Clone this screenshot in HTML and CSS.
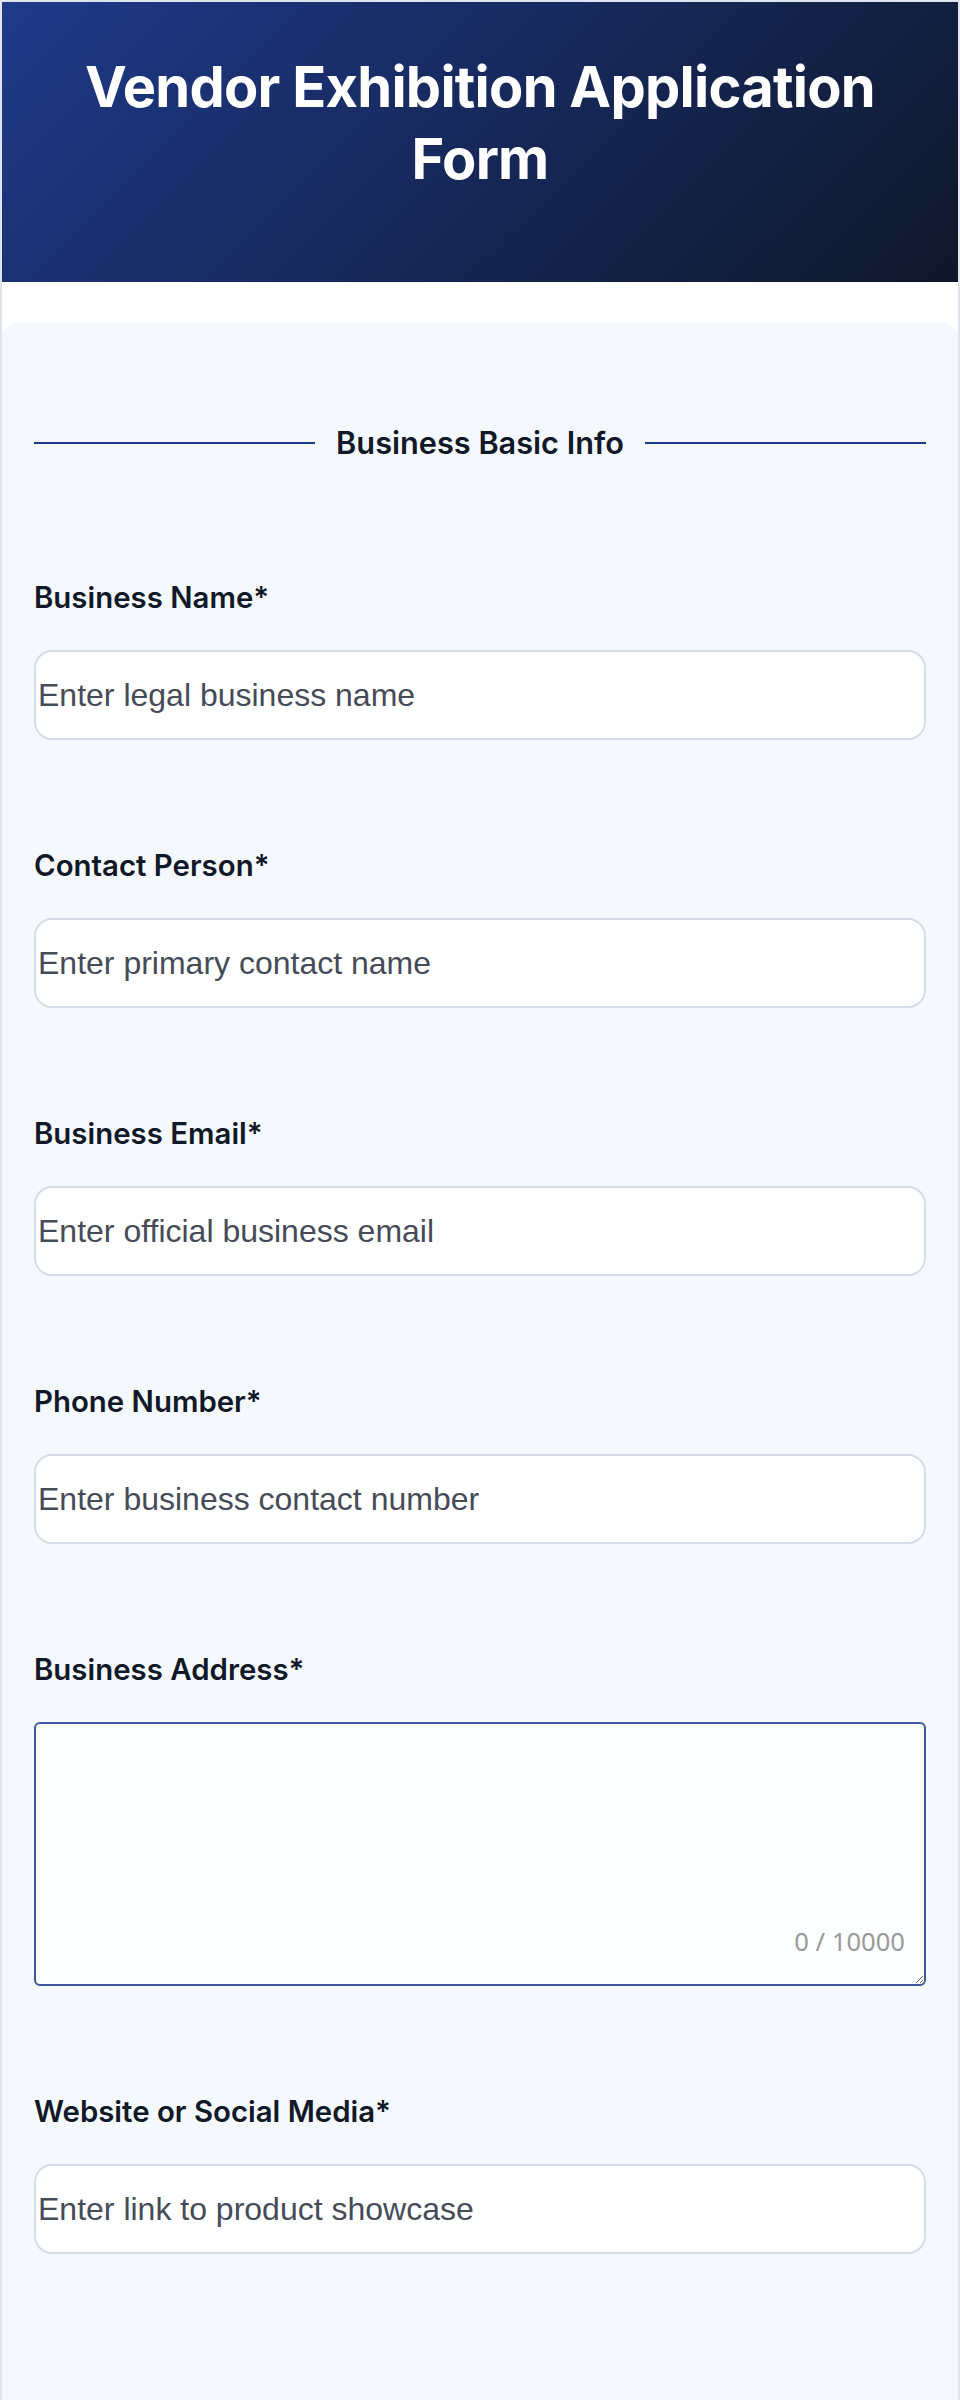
FILE: index.html
```html
<!DOCTYPE html>
<html lang="en">
<head>
<meta charset="utf-8">
<title>Vendor Exhibition Application Form</title>
<link rel="stylesheet" href="styles.css">
</head>
<body>
<div class="page">
  <header class="hero">
    <h1 class="hero-title">Vendor Exhibition Application Form</h1>
  </header>
  <main class="card">
    <div class="section-divider">
      <span class="divider-line"></span>
      <h2 class="section-title">Business Basic Info</h2>
      <span class="divider-line"></span>
    </div>
    <form class="form">
      <div class="field">
        <label class="field-label" for="bname">Business Name*</label>
        <input class="field-input" id="bname" type="text" placeholder="Enter legal business name">
      </div>
      <div class="field">
        <label class="field-label" for="cperson">Contact Person*</label>
        <input class="field-input" id="cperson" type="text" placeholder="Enter primary contact name">
      </div>
      <div class="field">
        <label class="field-label" for="bemail">Business Email*</label>
        <input class="field-input" id="bemail" type="email" placeholder="Enter official business email">
      </div>
      <div class="field">
        <label class="field-label" for="phone">Phone Number*</label>
        <input class="field-input" id="phone" type="tel" placeholder="Enter business contact number">
      </div>
      <div class="field">
        <label class="field-label" for="addr">Business Address*</label>
        <div class="textarea-wrap">
          <textarea class="field-textarea" id="addr" maxlength="10000"></textarea>
          <span class="char-count">0 / 10000</span>
        </div>
      </div>
      <div class="field">
        <label class="field-label" for="site">Website or Social Media*</label>
        <input class="field-input" id="site" type="url" placeholder="Enter link to product showcase">
      </div>
    </form>
  </main>
</div>
</body>
</html>
```

FILE: styles.css
```css
* { box-sizing: border-box; }

html, body {
  margin: 0;
}

body {
  padding: 2px 2px 0 2px;
  background: #dfe4ee;
  font-family: Inter, "Noto Sans", sans-serif;
  min-height: 2400px;
}

.page {
  background: #ffffff;
  min-height: 2398px;
  display: flex;
  flex-direction: column;
}

.hero {
  background: linear-gradient(135deg, #1e3a8a 0%, #0f172a 100%);
  padding: 49px 40px 87px;
  margin-bottom: 40px;
}

.hero-title {
  margin: 0;
  color: #ffffff;
  font-family: Inter, sans-serif;
  font-weight: 700;
  font-size: 56px;
  line-height: 72px;
  letter-spacing: -0.013em;
  text-align: center;
}

.card {
  flex: 1;
  background: #f5f8fd;
  border-radius: 16px 16px 0 0;
  padding: 102px 32px 80px;
}

.section-divider {
  display: flex;
  align-items: center;
  gap: 21px;
  margin-bottom: 119px;
}

.divider-line {
  flex: 1;
  height: 2px;
  background: #1e3a8a;
}

.section-title {
  margin: 0;
  font-family: Inter, sans-serif;
  font-weight: 600;
  font-size: 30.7px;
  line-height: 37px;
  color: #111827;
}

.form {
  display: flex;
  flex-direction: column;
  gap: 108px;
}

.field {
  display: flex;
  flex-direction: column;
}

.field-label {
  display: block;
  font-family: Inter, sans-serif;
  font-weight: 600;
  font-size: 29.4px;
  line-height: 35px;
  color: #111827;
  margin-bottom: 35px;
}

.field-input {
  display: block;
  width: 100%;
  height: 90px;
  padding: 0 2px;
  border: 2px solid #d6dce7;
  border-radius: 18px;
  background: #ffffff;
  font-family: "Liberation Sans", Arial, sans-serif;
  font-size: 32px;
  color: #111827;
  outline: none;
}

.field-input::placeholder {
  color: #464b58;
  opacity: 1;
}

.textarea-wrap {
  position: relative;
}

.field-textarea {
  display: block;
  width: 100%;
  height: 264px;
  padding: 8px;
  border: 2px solid #3c5a9a;
  border-radius: 6px;
  background: #fdfeff;
  font-family: "Liberation Sans", Arial, sans-serif;
  font-size: 32px;
  color: #111827;
  resize: vertical;
  outline: none;
}

.char-count {
  position: absolute;
  right: 21px;
  bottom: 31px;
  font-family: "Noto Sans", sans-serif;
  font-size: 25.6px;
  line-height: 26px;
  color: #9a9a9a;
  pointer-events: none;
}
```
